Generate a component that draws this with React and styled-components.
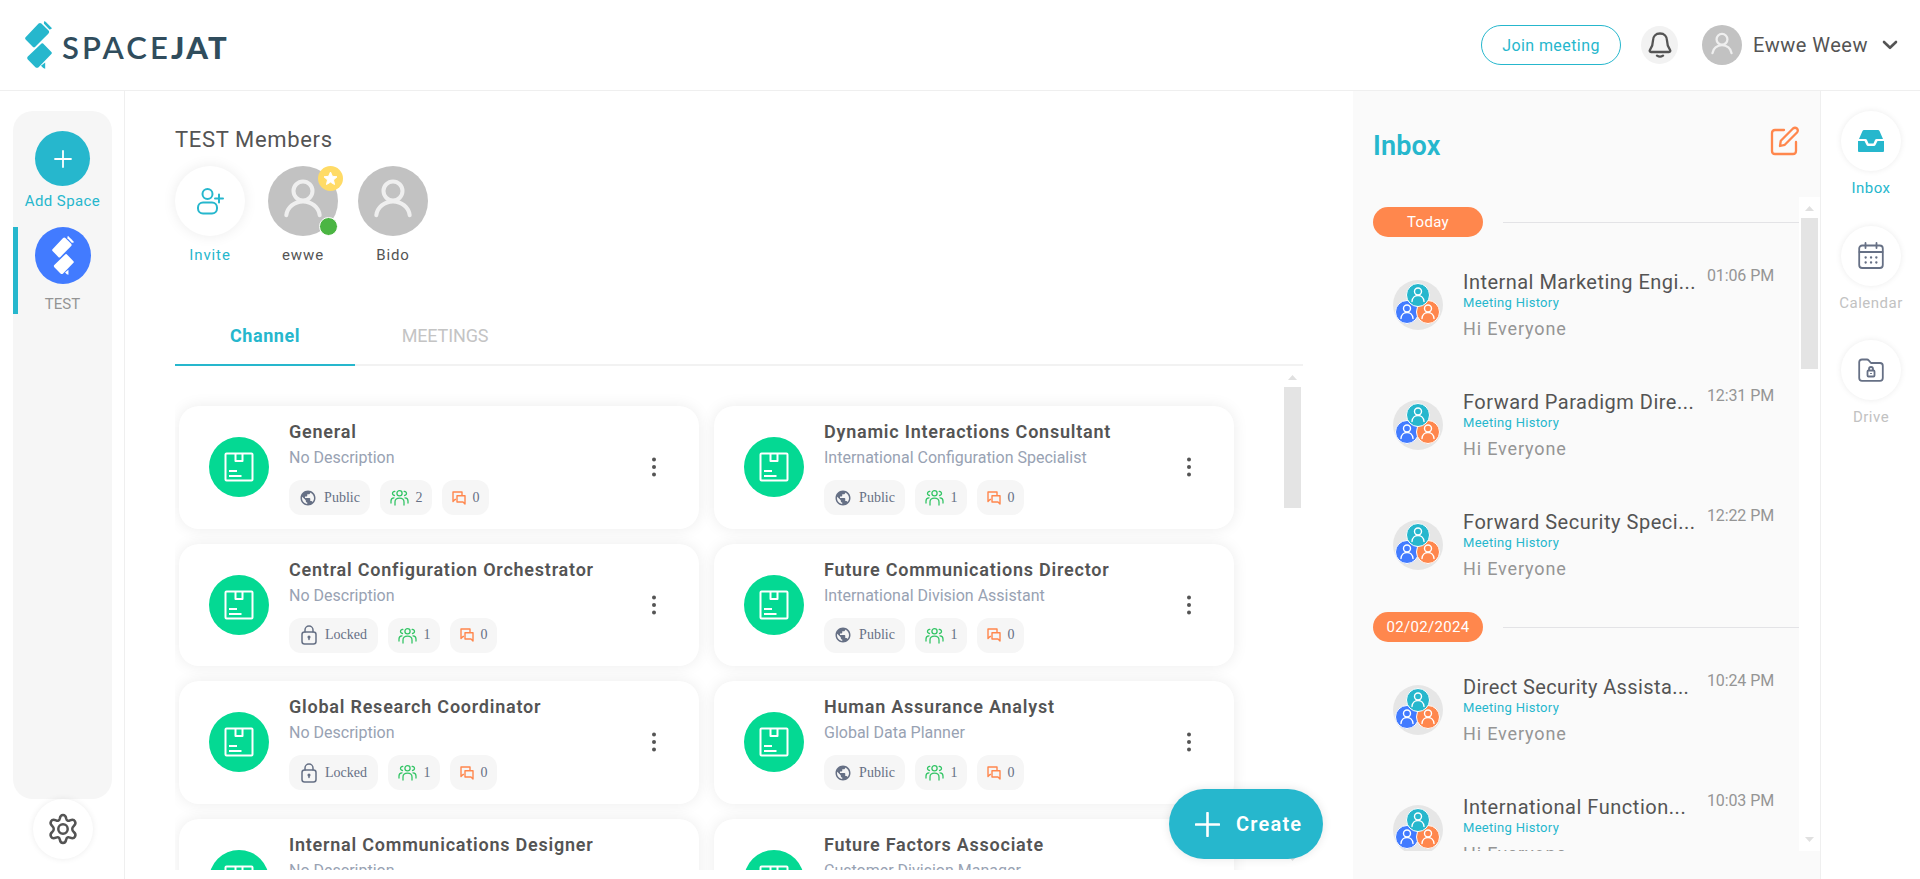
import React from "react";
import styled, { createGlobalStyle } from "styled-components";

const teal = "#26b7cd";
const sans = 'Roboto, "Liberation Sans", sans-serif';

const GlobalStyle = createGlobalStyle`
  * { box-sizing: border-box; }
  body { margin: 0; background: #fff; overflow: hidden; font-family: ${sans}; color: #545454; }
  svg { display: block; flex: none; }
  button { font-family: inherit; padding: 0; border: 0; }
`;

const Page = styled.div`
  height: 879px;
  display: flex;
  flex-direction: column;
  overflow: hidden;
`;
const Header = styled.header`
  height: 91px;
  flex: none;
  border-bottom: 1px solid #efefef;
  display: flex;
  align-items: center;
  justify-content: space-between;
  padding: 0 22px 0 25px;
`;
const Brand = styled.div`
  display: flex;
  align-items: center;
  gap: 10px;
`;
const BrandName = styled.div`
  font: 600 31px/40px Lato, sans-serif;
  color: #304d5d;
  letter-spacing: 3.1px;
  white-space: nowrap;
  padding-top: 3px;
`;
const BrandHeavy = styled.span`
  font-weight: 900;
  letter-spacing: 2.2px;
`;
const HeaderActions = styled.div`
  display: flex;
  align-items: center;
`;
const JoinButton = styled.button`
  width: 140px;
  height: 40px;
  border: 1px solid ${teal};
  border-radius: 20px;
  background: #fff;
  color: ${teal};
  font-size: 16px;
  letter-spacing: 0.42px;
`;
const BellButton = styled.button`
  width: 37px;
  height: 38px;
  margin: 0 24px 0 20px;
  border-radius: 50%;
  background: #f2f2f2;
  display: grid;
  place-items: center;
`;
const UserName = styled.div`
  width: 115px;
  margin: 0 14px 0 11px;
  font-size: 20px;
  letter-spacing: 0.5px;
  white-space: nowrap;
`;
const Body = styled.div`
  flex: 1;
  min-height: 0;
  display: flex;
`;
const Sidebar = styled.aside`
  width: 125px;
  flex: none;
  border-right: 1px solid #efefef;
  padding: 20px 12px 0 13px;
  display: flex;
  flex-direction: column;
  align-items: center;
`;
const SpaceList = styled.div`
  width: 99px;
  height: 688px;
  border-radius: 20px;
  background: #f6f6f6;
  padding-top: 20px;
`;
const Space = styled.div`
  height: ${(p) => (p.$active ? 87 : 96)}px;
  border-left: 5px solid ${(p) => (p.$active ? teal : "transparent")};
  padding-right: 5px;
  display: flex;
  flex-direction: column;
  align-items: center;
  font-size: 15px;
  letter-spacing: ${(p) => (p.$active ? 0.1 : 0.4)}px;
  line-height: 18px;
  white-space: nowrap;
  gap: ${(p) => (p.$active ? 11 : 6)}px;
  color: ${(p) => (p.$active ? "#949494" : teal)};
`;
const SpaceIcon = styled.div`
  width: ${(p) => p.$w}px;
  height: ${(p) => p.$h}px;
  flex: none;
  border-radius: 50%;
  background: ${(p) => p.$color};
  display: grid;
  place-items: center;
`;
const RoundButton = styled.button`
  width: ${(p) => p.$size || 60}px;
  height: ${(p) => p.$size || 60}px;
  border-radius: 50%;
  background: #fff;
  box-shadow: 0 0 ${(p) => (p.$size ? 14 : 6)}px rgba(0, 0, 0, 0.08);
  display: grid;
  place-items: center;
`;
const Main = styled.main`
  width: 1228px;
  flex: none;
  padding: 36px 50px 0;
`;
const Title = styled.h1`
  margin: 0 0 13px;
  font-weight: 400;
  font-size: 22px;
  line-height: 25px;
  padding-bottom: 1px;
  letter-spacing: 0.65px;
`;
const Members = styled.div`
  display: flex;
`;
const Member = styled.div`
  width: 70px;
  margin-right: ${(p) => p.$gap}px;
  display: flex;
  flex-direction: column;
  align-items: center;
  gap: 10px;
  font-size: 15px;
  line-height: 18px;
  letter-spacing: 0.9px;
  color: ${(p) => (p.$accent ? teal : "#545454")};
`;
const Avatar = styled.div`
  width: ${(p) => p.$size}px;
  height: ${(p) => p.$size}px;
  flex: none;
  border-radius: 50%;
  background: #c2c2c2;
  position: relative;
`;
const StarBadge = styled.span`
  position: absolute;
  top: 0;
  right: -5px;
  width: 25px;
  height: 25px;
  border-radius: 50%;
  background: #ffdb66;
  display: grid;
  place-items: center;
`;
const OnlineDot = styled.span`
  position: absolute;
  right: 0;
  bottom: 0;
  width: 19px;
  height: 19px;
  border: 1px solid #fff;
  border-radius: 50%;
  background: #4bb543;
`;
const Tabs = styled.nav`
  display: flex;
  margin-top: 40px;
  height: 62px;
  border-bottom: 2px solid #f2f2f2;
`;
const Tab = styled.div`
  width: 180px;
  height: 62px;
  border-bottom: 2px solid ${(p) => (p.$active ? teal : "transparent")};
  line-height: 63px;
  text-align: center;
  font-size: 18px;
  font-weight: ${(p) => (p.$active ? 700 : 400)};
  letter-spacing: ${(p) => (p.$active ? 0.55 : -0.15)}px;
  color: ${(p) => (p.$active ? teal : "#c4c4c4")};
`;
const ChannelArea = styled.div`
  height: 504px;
  overflow: hidden;
  display: flex;
  justify-content: space-between;
`;
const ChannelGrid = styled.div`
  display: grid;
  grid-template-columns: 520px 520px;
  grid-auto-rows: 122.6px;
  gap: 15px;
  padding: 40px 0 0 4px;
`;
const Card = styled.article`
  border-radius: 20px;
  background: #fff;
  box-shadow: 0 0 15px rgba(0, 0, 0, 0.08);
  display: flex;
  align-items: center;
  padding: 0 40px 0 30px;
`;
const CardIcon = styled.div`
  width: 60px;
  height: 60px;
  border-radius: 50%;
  background: #04d993;
  display: grid;
  place-items: center;
`;
const CardBody = styled.div`
  flex: 1;
  margin-left: 20px;
  height: 94px;
`;
const CardTitle = styled.h2`
  margin: 0;
  font-size: 18px;
  line-height: 24px;
  font-weight: 600;
  letter-spacing: 0.77px;
  white-space: nowrap;
`;
const CardText = styled.div`
  font-size: 16px;
  line-height: 20px;
  color: #98a2b3;
  margin: 4px 0 12px;
`;
const Chips = styled.div`
  display: flex;
  gap: 10px;
`;
const Chip = styled.span`
  height: 35px;
  width: ${(p) => p.$w}px;
  border-radius: 12px;
  background: #f6f6f6;
  display: flex;
  align-items: center;
  justify-content: center;
  gap: 7px;
  color: #667085;
  font: 14px/18px "Liberation Serif", serif;
`;
const Track = styled.div`
  width: ${(p) => p.$w}px;
  flex: none;
  background: ${(p) => (p.$plain ? "transparent" : "#fff")};
  display: flex;
  flex-direction: column;
  align-items: center;
  padding: ${(p) => p.$pad};
`;
const Thumb = styled.div`
  width: 17px;
  height: ${(p) => p.$h}px;
  margin-top: 7px;
  background: #e4e4e4;
`;
const Spacer = styled.div`
  flex: 1;
`;
const CreateButton = styled.button`
  position: absolute;
  left: 1169px;
  top: 789px;
  width: 154px;
  height: 70px;
  border-radius: 35px;
  background: ${teal};
  color: #fff;
  font-size: 20px;
  font-weight: 600;
  letter-spacing: 1.2px;
  display: flex;
  align-items: center;
  padding-left: 26px;
  gap: 16px;
  box-shadow: 0 0 10px rgba(0, 0, 0, 0.1);
`;
const Inbox = styled.section`
  width: 467px;
  flex: none;
  background: #fafafa;
  padding: 35px 0 0 20px;
`;
const InboxHead = styled.div`
  display: flex;
  justify-content: space-between;
  height: 71px;
  padding-right: 20px;
`;
const InboxTitle = styled.h2`
  margin: 2px 0 0;
  color: ${teal};
  font-size: 27px;
  line-height: 36px;
  font-weight: 600;
  letter-spacing: 0.15px;
`;
const InboxScroll = styled.div`
  height: 654px;
  display: flex;
  overflow: hidden;
`;
const Messages = styled.div`
  flex: 1;
  padding-top: 3px;
`;
const DateRow = styled.div`
  display: flex;
  align-items: center;
  gap: 20px;
  padding: 7px 0 8px;
`;
const DatePill = styled.div`
  width: 110px;
  height: 30px;
  border-radius: 15px;
  background: #ff874d;
  color: #fff;
  text-align: center;
  font-size: 15px;
  line-height: 30px;
  letter-spacing: 0.3px;
`;
const Rule = styled.div`
  flex: 1;
  height: 1px;
  background: #e3e3e6;
`;
const Message = styled.article`
  height: 120px;
  padding: 20px 25px 0 20px;
  display: flex;
`;
const MessageText = styled.div`
  width: 236px;
  margin-left: 20px;
  padding-top: 4px;
`;
const MessageTitle = styled.div`
  font-size: 20px;
  line-height: 26px;
  letter-spacing: ${(p) => p.$ls}px;
  white-space: nowrap;
`;
const MessageKind = styled.div`
  font-size: 13px;
  line-height: 16px;
  letter-spacing: 0.3px;
  color: ${teal};
`;
const MessagePreview = styled.div`
  margin-top: 7px;
  font-size: 18px;
  line-height: 22px;
  letter-spacing: 0.85px;
  color: #959595;
`;
const MessageTime = styled.time`
  flex: 1;
  text-align: right;
  font-size: 16px;
  line-height: 20px;
  padding-top: 1px;
  letter-spacing: -0.1px;
  color: #959595;
  white-space: nowrap;
`;
const GroupAvatar = styled.div`
  padding-top: 15px;
`;
const Rail = styled.aside`
  flex: 1;
  border-left: 1px solid #efefef;
  padding: 20px 0 0 1px;
  display: flex;
  flex-direction: column;
  align-items: center;
`;
const RailItem = styled.div`
  height: 114.5px;
  display: flex;
  flex-direction: column;
  align-items: center;
  gap: 8px;
  font-size: 15px;
  line-height: 18px;
  letter-spacing: 0.5px;
  color: ${(p) => (p.$active ? teal : "#c2c2c2")};
`;

const Mark = ({ w, h, color }) => (
  <svg width={w} height={h} viewBox="0 0 27 48" fill={color}>
    <path d="M13.6 2.4Q15 1.400 16.400 2.400L23.300 9.300Q25 11 23.300 12.700L10 26Q9 26.800 8 26L.6 18.400Q-.4 17.300.6 16.200Z" />
    <path d="M19.500 0Q20 0 27 7.300Q25.500 8.900 24.200 8.200L19 2.800Q18.600 1 19.500 0Z" />
    <path d="M16.500 22.600Q17.300 21.800 18.100 22.600L26.400 31Q27.300 32 26.400 33L13.600 46.200Q12 47.500 10.400 46.200L2.800 38.400Q1.600 37 2.800 35.600Z" />
    <path d="M20.200 41.600V47.700Q18.500 47.800 16 44.800Z" />
  </svg>
);
const Person = ({ size }) => (
  <svg width={size} height={size} viewBox="0 0 70 70" fill="none" stroke="#efefef" strokeWidth="4" strokeLinecap="round">
    <circle cx="35" cy="25" r="9.500" />
    <path d="M18.300 49.200a16.800 15.500 0 0 1 33.400 0" />
  </svg>
);
const Plus = ({ size, sw }) => (
  <svg width={size} height={size} viewBox={`0 0 ${size} ${size}`} stroke="#fff" strokeWidth={sw} strokeLinecap="round">
    <path d={`M${size / 2} 1V${size - 1}M1 ${size / 2}H${size - 1}`} />
  </svg>
);
const Gear = () => (
  <svg width="30" height="32" viewBox="0 0 30 32" fill="none" stroke="#545454" strokeWidth="2.500" strokeLinejoin="round">
    <circle cx="15" cy="16" r="4.700" />
    <path d="M11.800 5.500C12.200 3 13.200 2 15 2s2.800 1 3.200 3.500c.5 2.300 1.900 2.800 3.800 1.900 2.200-1 4-.7 5 1 .9 1.600.5 3.200-1.400 4.800-1.800 1.500-1.800 4 0 5.600 1.900 1.600 2.300 3.200 1.400 4.800-1 1.700-2.800 2-5 1-1.900-.9-3.300-.4-3.800 1.900C17.800 29 16.800 30 15 30s-2.800-1-3.200-3.500c-.5-2.300-1.900-2.800-3.800-1.900-2.200 1-4 .7-5-1-.9-1.600-.5-3.200 1.400-4.800 1.800-1.600 1.800-4.100 0-5.600C2.500 11.600 2.100 10 3 8.400c1-1.700 2.800-2 5-1 1.900.9 3.300.4 3.800-1.900Z" />
  </svg>
);
const Bell = () => (
  <svg width="24" height="26" viewBox="0 0 24 26" fill="none" stroke="#545454" strokeWidth="2.300" strokeLinecap="round" strokeLinejoin="round">
    <path d="M12 1.500c-4.300 0-7 3-7 7 0 4.800-1.600 7.300-3 9.300-.7 1.100-.2 2.200 1 2.200h18c1.200 0 1.700-1.100 1-2.200-1.400-2-3-4.500-3-9.300 0-4-2.700-7-7-7Z" />
    <path d="M9 23.600q3 2 6 0" />
  </svg>
);
const Chevron = () => (
  <svg width="16" height="10" viewBox="0 0 16 10" fill="none" stroke="#545454" strokeWidth="2.600" strokeLinecap="round" strokeLinejoin="round">
    <path d="m2 2 6 5.800L14 2" />
  </svg>
);
const InviteIcon = () => (
  <svg width="28" height="28" viewBox="0 0 28 28" fill="none" stroke={teal} strokeWidth="2" strokeLinecap="round">
    <circle cx="11.500" cy="7" r="5" />
    <rect x="2" y="15.500" width="19" height="11" rx="5" />
    <path d="M23 7.500v8M19 11.500h8" />
  </svg>
);
const Star = () => (
  <svg width="15" height="15" viewBox="0 0 15 15" fill="#fff" stroke="#fff" strokeLinejoin="round">
    <path d="m7.500 1 1.900 4.300 4.600.5-3.500 3.100 1 4.600-4-2.400-4 2.400 1-4.600L1 5.800l4.600-.5Z" />
  </svg>
);
const Box = () => (
  <svg width="30" height="30" viewBox="0 0 30 30" fill="none" stroke="#fff" strokeWidth="2" strokeLinejoin="round">
    <rect x="1.500" y="1.500" width="27" height="27" rx="1" />
    <path d="M11.500 2v7h7V2M5 19h8M5 24h12.500" />
  </svg>
);
const Globe = () => (
  <svg width="18" height="18" viewBox="0 0 24 24" fill="#667085">
    <path d="M12 2C6.480 2 2 6.480 2 12s4.480 10 10 10 10-4.480 10-10S17.520 2 12 2zm-1 17.930c-3.950-.49-7-3.850-7-7.930 0-.62.08-1.210.21-1.790L9 15v1c0 1.100.9 2 2 2v1.930zm6.900-2.540c-.26-.81-1-1.390-1.900-1.390h-1v-3c0-.55-.45-1-1-1H8v-2h2c.55 0 1-.45 1-1V7h2c1.100 0 2-.9 2-2v-.41c2.930 1.190 5 4.060 5 7.410 0 2.080-.8 3.970-2.100 5.390z" />
  </svg>
);
const Lock = () => (
  <svg width="18" height="20" viewBox="0 0 18 20" fill="none" stroke="#667085" strokeWidth="1.500" strokeLinecap="round">
    <rect x="2" y="7" width="14" height="12" rx="2.500" />
    <path d="M5 7V5a4 4 0 0 1 8 0v2M9 12.500v2" />
    <circle cx="9" cy="12" r=".8" />
  </svg>
);
const People = () => (
  <svg width="19" height="17" viewBox="0 0 19 17" fill="none" stroke="#34c566" strokeWidth="1.300" strokeLinecap="round">
    <circle cx="9.500" cy="4.300" r="2.600" />
    <path d="M5 16v-3c0-5.300 9-5.300 9 0v3M4.800 2.500C2 2 1.600 6.300 4.500 6.500M14.200 2.500c2.800-.5 3.200 3.800.3 4M1 14v-2c0-2 1-3.200 3-3.200M18 14v-2c0-2-1-3.200-3-3.200" />
  </svg>
);
const Chat = () => (
  <svg width="14" height="14" viewBox="0 0 14 14" fill="none" stroke="#ff874d" strokeWidth="1.400" strokeLinejoin="round">
    <path d="M4 8.500H3L1 10.500V1h9v3.500" />
    <path d="M5 4.800h8V13l-2-2H5Z" />
  </svg>
);
const Dots = () => (
  <svg width="10" height="22" viewBox="0 0 10 22" fill="#545454">
    <circle cx="5" cy="3.500" r="2" /><circle cx="5" cy="11" r="2" /><circle cx="5" cy="18.500" r="2" />
  </svg>
);
const Edit = () => (
  <svg width="30" height="30" viewBox="0 0 30 30" fill="none" stroke="#ff874d" strokeWidth="2.300" strokeLinecap="round" strokeLinejoin="round">
    <path d="M14 4H5Q2 4 2 7v18q0 3 3 3h18q3 0 3-3v-9" />
    <path d="m10 20 .8-5.300L23 2.500q2-1.600 4 0 1.600 2 0 4L14.800 18.800Z" />
  </svg>
);
const Arrow = ({ down }) => (
  <svg width="9" height="5" viewBox="0 0 9 5" fill="#e0e0e0">
    <path d={down ? "M0 0h9L4.500 5Z" : "M0 5h9L4.500 0Z"} />
  </svg>
);
const Tray = () => (
  <svg width="26" height="22" viewBox="0 0 26 22" fill={teal}>
    <path d="M6 0h14q1 0 1.500 1L25 9h-6.500q-1 0-1.500 1l-1.500 3.500h-5L9 10Q8.500 9 7.500 9H1l3.500-8Q5 0 6 0Z" />
    <path d="M0 11h6.500L8.500 15q.5 1 1.500 1h6q1 0 1.500-1l2-4H26v10q0 1-1 1H1q-1 0-1-1Z" />
  </svg>
);
const CalendarIcon = () => (
  <svg width="26" height="28" viewBox="0 0 26 28" fill="none" stroke="#667085" strokeWidth="1.800" strokeLinecap="round">
    <rect x="1.200" y="3.500" width="23.600" height="22.500" rx="3" />
    <path d="M1.500 10h23M7.500 1v5M18.500 1v5" />
    <path d="M7.600 15.500h.1M13 15.500h.1M18.300 15.500h.1M7.600 20.500h.1M13 20.500h.1M18.300 20.500h.1" strokeWidth="2.300" />
  </svg>
);
const DriveIcon = () => (
  <svg width="26" height="24" viewBox="0 0 26 24" fill="none" stroke="#667085" strokeWidth="1.800" strokeLinejoin="round">
    <path d="M4 1.500h5q1 0 1.700.8L13 5h9q2.800 0 2.800 2.800V20q0 2.800-2.800 2.800H4Q1.200 22.800 1.200 20V4.300Q1.200 1.500 4 1.500Z" />
    <rect x="9.500" y="12.500" width="7" height="6" rx="1" />
    <path d="M11 12.500V11a2 2 0 0 1 4 0v1.500M13 15v1" />
  </svg>
);
const groupMembers = [[14, 32, "#427bff"], [35, 32, "#ff874d"], [25, 15, teal]];
const Group = () => (
  <svg width="50" height="50" viewBox="0 0 50 50">
    <circle cx="25" cy="25" r="25" fill="#e6e6e6" />
    {groupMembers.map(([x, y, c]) => (
      <g key={c} fill="none" stroke="#fff">
        <circle cx={x} cy={y} r="11.500" fill={c} />
        <g strokeWidth="1.400" strokeLinecap="round">
          <circle cx={x} cy={y - 3.500} r="3.500" />
          <path d={`M${x - 6} ${y + 6.5}C${x - 5.500} ${y - 1.500} ${x + 5.500} ${y - 1.500} ${x + 6} ${y + 6.5}`} />
        </g>
      </g>
    ))}
  </svg>
);

const channels = [
  ["General", "No Description", "Public", 2],
  ["Dynamic Interactions Consultant", "International Configuration Specialist", "Public", 1],
  ["Central Configuration Orchestrator", "No Description", "Locked", 1],
  ["Future Communications Director", "International Division Assistant", "Public", 1],
  ["Global Research Coordinator", "No Description", "Locked", 1],
  ["Human Assurance Analyst", "Global Data Planner", "Public", 1],
  ["Internal Communications Designer", "No Description", "Public", 1],
  ["Future Factors Associate", "Customer Division Manager", "Public", 1],
];
const inbox = [
  ["Today", [
    ["Internal Marketing Engi...", "01:06 PM", 0.47],
    ["Forward Paradigm Dire...", "12:31 PM", 0.49],
    ["Forward Security Speci...", "12:22 PM", 0.53],
  ]],
  ["02/02/2024", [
    ["Direct Security Assista...", "10:24 PM", 0.4],
    ["International Function...", "10:03 PM", 0.53],
  ]],
];

export default function App() {
  return (
    <Page>
      <GlobalStyle />
      <Header>
        <Brand>
          <Mark w={27} h={48} color={teal} />
          <BrandName>SPACE<BrandHeavy>JAT</BrandHeavy></BrandName>
        </Brand>
        <HeaderActions>
          <JoinButton>Join meeting</JoinButton>
          <BellButton><Bell /></BellButton>
          <Avatar $size={40}><Person size={40} /></Avatar>
          <UserName>Ewwe Weew</UserName>
          <Chevron />
        </HeaderActions>
      </Header>
      <Body>
        <Sidebar>
          <SpaceList>
            <Space>
              <SpaceIcon $w={55} $h={55} $color={teal}><Plus size={18} sw={1.8} /></SpaceIcon>
              Add Space
            </Space>
            <Space $active>
              <SpaceIcon $w={56} $h={57} $color="#427bff"><Mark w={22} h={39} color="#fff" /></SpaceIcon>
              TEST
            </Space>
          </SpaceList>
          <RoundButton><Gear /></RoundButton>
        </Sidebar>
        <Main>
          <Title>TEST Members</Title>
          <Members>
            <Member $accent $gap={23}>
              <RoundButton $size={70}><InviteIcon /></RoundButton>
              Invite
            </Member>
            <Member $gap={20}>
              <Avatar $size={70}><Person size={70} /><StarBadge><Star /></StarBadge><OnlineDot /></Avatar>
              ewwe
            </Member>
            <Member $gap={0}>
              <Avatar $size={70}><Person size={70} /></Avatar>
              Bido
            </Member>
          </Members>
          <Tabs>
            <Tab $active>Channel</Tab>
            <Tab>MEETINGS</Tab>
          </Tabs>
          <ChannelArea>
            <ChannelGrid>
              {channels.map(([name, text, access, members]) => (
                <Card key={name}>
                  <CardIcon><Box /></CardIcon>
                  <CardBody>
                    <CardTitle>{name}</CardTitle>
                    <CardText>{text}</CardText>
                    <Chips>
                      <Chip $w={access === "Public" ? 81 : 89}>
                        {access === "Public" ? <Globe /> : <Lock />}
                        {access}
                      </Chip>
                      <Chip $w={52}><People />{members}</Chip>
                      <Chip $w={47}><Chat />0</Chip>
                    </Chips>
                  </CardBody>
                  <Dots />
                </Card>
              ))}
            </ChannelGrid>
            <Track $w={21} $pad="9px 0 9px" $plain>
              <Arrow />
              <Thumb $h={121} />
              <Spacer />
              <Arrow down />
            </Track>
          </ChannelArea>
        </Main>
        <Inbox>
          <InboxHead>
            <InboxTitle>Inbox</InboxTitle>
            <Edit />
          </InboxHead>
          <InboxScroll>
            <Messages>
              {inbox.map(([date, messages]) => (
                <React.Fragment key={date}>
                  <DateRow><DatePill>{date}</DatePill><Rule /></DateRow>
                  {messages.map(([name, time, ls]) => (
                    <Message key={name}>
                      <GroupAvatar><Group /></GroupAvatar>
                      <MessageText>
                        <MessageTitle $ls={ls}>{name}</MessageTitle>
                        <MessageKind>Meeting History</MessageKind>
                        <MessagePreview>Hi Everyone</MessagePreview>
                      </MessageText>
                      <MessageTime>{time}</MessageTime>
                    </Message>
                  ))}
                </React.Fragment>
              ))}
            </Messages>
            <Track $w={21} $pad="9px 0">
              <Arrow />
              <Thumb $h={151} />
              <Spacer />
              <Arrow down />
            </Track>
          </InboxScroll>
        </Inbox>
        <Rail>
          <RailItem $active><RoundButton><Tray /></RoundButton>Inbox</RailItem>
          <RailItem><RoundButton><CalendarIcon /></RoundButton>Calendar</RailItem>
          <RailItem><RoundButton><DriveIcon /></RoundButton>Drive</RailItem>
        </Rail>
      </Body>
      <CreateButton><Plus size={25} sw={2.6} />Create</CreateButton>
    </Page>
  );
}
